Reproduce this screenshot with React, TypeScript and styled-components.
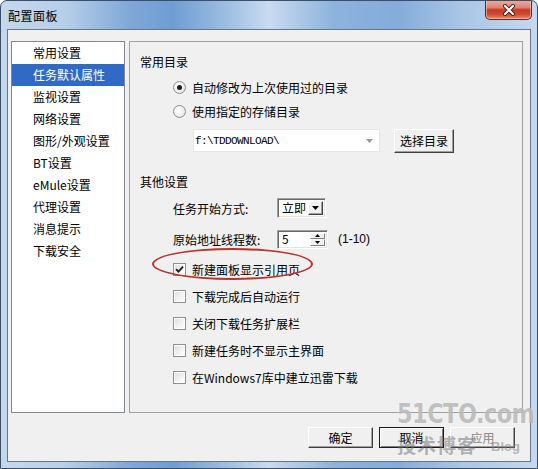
import React from 'react';
import styled, { createGlobalStyle } from 'styled-components';

const Global = createGlobalStyle`
  html, body { margin: 0; padding: 0; background: #ffffff; }
  body {
    font-family: "Noto Sans CJK SC", "Liberation Sans", sans-serif;
    font-size: 12px;
    color: #000;
  }
  * { box-sizing: border-box; }
`;

const Window = styled.div`
  position: relative;
  width: 538px;
  height: 469px;
  border: 1px solid #3c4f66;
  border-radius: 7px 7px 0 0;
  background: linear-gradient(90deg, #c4d8ed 0%, #b6cfe9 12%, #7fa8d8 24%, #6f9dd2 32%, #9dbde3 42%, #c9dbef 50%, #8db3dd 62%, #84acda 74%, #a9c6e7 86%, #c5d9ee 100%);
  display: flex;
  flex-direction: column;
  padding: 0 6px 6px 6px;
  overflow: hidden;
`;

const TitleBar = styled.div`
  height: 28px;
  display: flex;
  align-items: center;
  padding-left: 1px;
  font-size: 12px;
  color: #000;
  letter-spacing: 0.5px;
`;

const CloseButton = styled.div`
  position: absolute;
  top: -1px;
  right: 5px;
  width: 47px;
  height: 20px;
  border: 1px solid #5e2a22;
  border-top: none;
  border-radius: 0 0 5px 5px;
  background: linear-gradient(180deg, #eab0a2 0%, #dd8370 40%, #c53a22 52%, #cd4a32 75%, #e48c72 100%);
  display: flex;
  align-items: center;
  justify-content: center;
  box-shadow: inset 0 0 0 1px rgba(255, 220, 210, 0.5);
`;

const Client = styled.div`
  flex: 1;
  background: #f0f0f0;
  border: 1px solid #66778a;
  display: flex;
  flex-direction: column;
  padding: 11px 7px 0 3px;
`;

const Main = styled.div`
  display: flex;
  gap: 4px;
  height: 372px;
`;

const Sidebar = styled.div`
  width: 114px;
  border: 1px solid #828790;
  background: #ffffff;
  display: flex;
  flex-direction: column;
`;

const NavItem = styled.div<{ $active?: boolean }>`
  height: 22px;
  line-height: 22px;
  padding-left: 21px;
  white-space: nowrap;
  background: ${p => (p.$active ? '#316ac5' : 'transparent')};
  color: ${p => (p.$active ? '#ffffff' : '#000000')};
`;

const Panel = styled.div`
  position: relative;
  width: 394px;
  border: 1px solid #a0a0a0;
  padding: 12px 10px 0 10px;
  display: flex;
  flex-direction: column;
`;

const Heading = styled.div<{ $mt?: number }>`
  height: 16px;
  line-height: 16px;
  margin-top: ${p => p.$mt ?? 0}px;
`;

const OptionRow = styled.div<{ $mt?: number }>`
  position: relative;
  display: flex;
  align-items: center;
  gap: 6px;
  height: 20px;
  margin-left: 33px;
  margin-top: ${p => p.$mt ?? 0}px;
  white-space: nowrap;
`;

const RadioDot = styled.span<{ $on?: boolean }>`
  width: 13px;
  height: 13px;
  border-radius: 50%;
  border: 1px solid #8e8f8f;
  background: radial-gradient(circle at 40% 40%, #ffffff 0%, #eeeeee 55%, #cfcfcf 100%);
  display: inline-flex;
  align-items: center;
  justify-content: center;
  flex: none;
  &::after {
    content: '';
    width: 5px;
    height: 5px;
    border-radius: 50%;
    background: #1e1e1e;
    display: ${p => (p.$on ? 'block' : 'none')};
  }
`;

const CheckBox = styled.span`
  width: 13px;
  height: 13px;
  border: 1px solid #8e8f8f;
  background: linear-gradient(135deg, #dcdcdc 0%, #f4f4f4 60%, #ffffff 100%);
  box-shadow: inset 0 0 0 1px #ffffff;
  display: inline-flex;
  align-items: center;
  justify-content: center;
  flex: none;
`;

const ComboRow = styled.div`
  display: flex;
  align-items: flex-start;
  gap: 14px;
  margin-left: 53px;
  margin-top: 8px;
`;

const PathCombo = styled.div`
  width: 187px;
  height: 23px;
  background: #ffffff;
  border: 1px solid #e6e6e6;
  display: flex;
  align-items: center;
  justify-content: space-between;
  padding: 0 6px 0 1px;
  font-family: "Liberation Mono", "DejaVu Sans Mono", monospace;
  font-size: 11px;
  letter-spacing: -0.6px;
`;

const ClassicButton = styled.div<{ $w: number; $h: number; $default?: boolean; $disabled?: boolean }>`
  width: ${p => p.$w}px;
  height: ${p => p.$h}px;
  background: #f0f0f0;
  border: 1px solid;
  border-color: ${p => (p.$default ? '#1a1a1a' : '#ffffff #404040 #404040 #ffffff')};
  box-shadow: ${p => (p.$default ? 'inset 1px 1px #ffffff, inset -1px -1px #808080' : 'inset -1px -1px #a0a0a0')};
  color: ${p => (p.$disabled ? '#8a8a8a' : '#000000')};
  display: flex;
  align-items: center;
  justify-content: center;
  line-height: 1;
  flex: none;
`;

const FieldRow = styled.div<{ $mt: number }>`
  display: flex;
  align-items: center;
  height: 20px;
  margin-left: 33px;
  margin-top: ${p => p.$mt}px;
  white-space: nowrap;
`;

const FieldLabel = styled.span`
  width: 104px;
  flex: none;
`;

const Sunken = styled.div<{ $w: number; $h: number }>`
  width: ${p => p.$w}px;
  height: ${p => p.$h}px;
  background: #ffffff;
  border: 1px solid;
  border-color: #a0a0a0 #ffffff #ffffff #a0a0a0;
  box-shadow: inset 1px 1px #696969, inset -1px -1px #e3e3e3;
  display: flex;
  align-items: stretch;
  padding: 2px;
`;

const FieldText = styled.span`
  flex: 1;
  display: flex;
  align-items: center;
  padding-left: 2px;
  line-height: 1;
`;

const ArrowBtn = styled.div`
  width: 15px;
  background: #f0f0f0;
  border: 1px solid;
  border-color: #ffffff #404040 #404040 #ffffff;
  box-shadow: inset -1px -1px #a0a0a0;
  display: flex;
  align-items: center;
  justify-content: center;
`;

const SpinCol = styled.div`
  width: 15px;
  display: flex;
  flex-direction: column;
`;

const SpinHalf = styled.div`
  flex: 1;
  background: #f0f0f0;
  border: 1px solid;
  border-color: #ffffff #808080 #808080 #ffffff;
  display: flex;
  align-items: center;
  justify-content: center;
`;

const RangeNote = styled.span`
  margin-left: 10px;
  font-family: "Liberation Sans", sans-serif;
  font-size: 12px;
`;

const CheckList = styled.div`
  display: flex;
  flex-direction: column;
  gap: 7px;
  margin-top: 10px;
`;

const Ellipse = styled.div`
  position: absolute;
  left: -21px;
  top: -11px;
  width: 161px;
  height: 32px;
  border: 2px solid #b8332c;
  border-radius: 50%;
  pointer-events: none;
`;

const ButtonRow = styled.div`
  display: flex;
  justify-content: flex-end;
  gap: 6px;
  margin-top: 14px;
  padding-right: 8px;
`;

const Watermark = styled.div`
  position: absolute;
  left: 396px;
  top: 399px;
  display: flex;
  flex-direction: column;
  pointer-events: none;
`;

const WmBig = styled.div`
  font-family: "DejaVu Sans Condensed", "Liberation Sans", sans-serif;
  font-weight: bold;
  font-size: 27px;
  line-height: 28px;
  letter-spacing: -0.5px;
  color: rgba(140, 140, 140, 0.55);
  text-shadow: 0 0 1px rgba(255, 255, 255, 0.8);
  transform: scaleX(0.92);
  transform-origin: left center;
`;

const WmLine = styled.div`
  display: flex;
  align-items: flex-end;
  gap: 14px;
  margin-top: 7px;
`;

const WmCn = styled.span`
  font-size: 19px;
  font-weight: bold;
  line-height: 20px;
  color: rgba(110, 110, 110, 0.5);
  letter-spacing: 1px;
`;

const WmBlog = styled.span`
  font-family: "Liberation Sans", sans-serif;
  font-size: 13px;
  font-weight: bold;
  color: rgba(130, 130, 130, 0.55);
  line-height: 16px;
`;

const DownTri = ({ color = '#000', w = 7, h = 4 }: { color?: string; w?: number; h?: number }) => (
  <svg width={w} height={h} viewBox={`0 0 ${w} ${h}`}>
    <polygon points={`0,0 ${w},0 ${w / 2},${h}`} fill={color} />
  </svg>
);

const UpTri = ({ color = '#000', w = 5, h = 3 }: { color?: string; w?: number; h?: number }) => (
  <svg width={w} height={h} viewBox={`0 0 ${w} ${h}`}>
    <polygon points={`0,${h} ${w},${h} ${w / 2},0`} fill={color} />
  </svg>
);

const CheckMark = () => (
  <svg width="9" height="9" viewBox="0 0 9 9">
    <path d="M1 4.2 L3.4 6.6 L8 1.6" fill="none" stroke="#1c1c1c" strokeWidth="1.8" />
  </svg>
);

const CloseX = () => (
  <svg width="14" height="12" viewBox="0 0 14 12">
    <path d="M3 2 L11 10 M11 2 L3 10" stroke="#4a1a12" strokeWidth="4" strokeLinecap="round" />
    <path d="M3 2 L11 10 M11 2 L3 10" stroke="#ffffff" strokeWidth="2.2" strokeLinecap="round" />
  </svg>
);

const navItems = ['常用设置', '任务默认属性', '监视设置', '网络设置', '图形/外观设置', 'BT设置', 'eMule设置', '代理设置', '消息提示', '下载安全'];

const checks: { label: string; on: boolean; mark?: boolean }[] = [
  { label: '新建面板显示引用页', on: true, mark: true },
  { label: '下载完成后自动运行', on: false },
  { label: '关闭下载任务扩展栏', on: false },
  { label: '新建任务时不显示主界面', on: false },
  { label: '在Windows7库中建立迅雷下载', on: false },
];

export default function App() {
  return (
    <>
      <Global />
      <Window>
        <TitleBar>配置面板</TitleBar>
        <CloseButton>
          <CloseX />
        </CloseButton>
        <Client>
          <Main>
            <Sidebar>
              {navItems.map((n, i) => (
                <NavItem key={n} $active={i === 1}>
                  {n}
                </NavItem>
              ))}
            </Sidebar>
            <Panel>
              <Heading>常用目录</Heading>
              <OptionRow $mt={7}>
                <RadioDot $on />
                <span>自动修改为上次使用过的目录</span>
              </OptionRow>
              <OptionRow $mt={4}>
                <RadioDot />
                <span>使用指定的存储目录</span>
              </OptionRow>
              <ComboRow>
                <PathCombo>
                  <span>f:\TDDOWNLOAD\</span>
                  <DownTri color="#9a9a9a" w={7} h={4} />
                </PathCombo>
                <ClassicButton $w={60} $h={24}>选择目录</ClassicButton>
              </ComboRow>
              <Heading $mt={21}>其他设置</Heading>
              <FieldRow $mt={8}>
                <FieldLabel>任务开始方式:</FieldLabel>
                <Sunken $w={49} $h={20}>
                  <FieldText>立即</FieldText>
                  <ArrowBtn>
                    <DownTri />
                  </ArrowBtn>
                </Sunken>
              </FieldRow>
              <FieldRow $mt={11}>
                <FieldLabel>原始地址线程数:</FieldLabel>
                <Sunken $w={51} $h={19}>
                  <FieldText>5</FieldText>
                  <SpinCol>
                    <SpinHalf>
                      <UpTri />
                    </SpinHalf>
                    <SpinHalf>
                      <DownTri w={5} h={3} />
                    </SpinHalf>
                  </SpinCol>
                </Sunken>
                <RangeNote>(1-10)</RangeNote>
              </FieldRow>
              <CheckList>
                {checks.map(c => (
                  <OptionRow key={c.label}>
                    <CheckBox>{c.on && <CheckMark />}</CheckBox>
                    <span>{c.label}</span>
                    {c.mark && <Ellipse />}
                  </OptionRow>
                ))}
              </CheckList>
            </Panel>
          </Main>
          <ButtonRow>
            <ClassicButton $w={65} $h={21}>确定</ClassicButton>
            <ClassicButton $w={65} $h={21} $default>取消</ClassicButton>
            <ClassicButton $w={65} $h={21} $disabled>应用</ClassicButton>
          </ButtonRow>
        </Client>
        <Watermark>
          <WmBig>51CTO.com</WmBig>
          <WmLine>
            <WmCn>技术博客</WmCn>
            <WmBlog>Blog</WmBlog>
          </WmLine>
        </Watermark>
      </Window>
    </>
  );
}
